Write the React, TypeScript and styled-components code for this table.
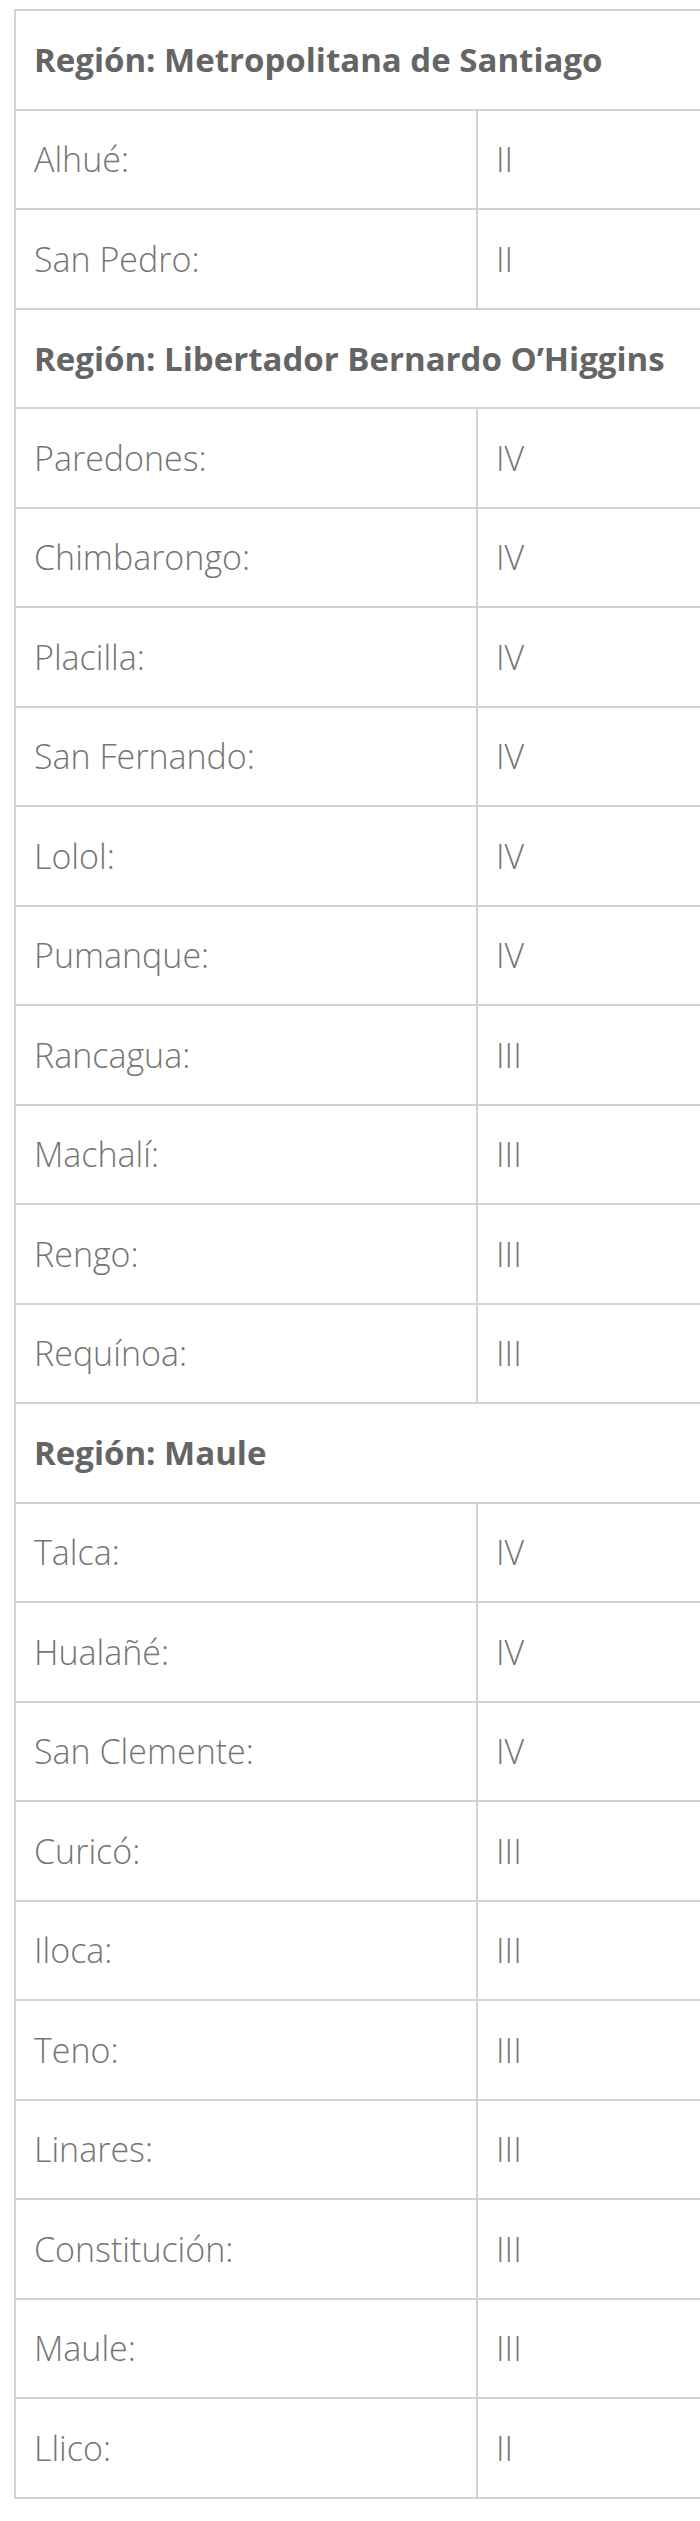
import React from "react";
import styled, { createGlobalStyle } from "styled-components";

const GlobalStyle = createGlobalStyle`
  html, body {
    margin: 0;
    padding: 0;
    background: #fff;
    overflow-x: hidden;
  }
  body {
    font-family: "Open Sans", "Noto Sans", sans-serif;
  }
`;

type Entry = { name: string; level: string };
type Region = { title: string; rows: Entry[] };

const regions: Region[] = [
  {
    title: "Región: Metropolitana de Santiago",
    rows: [
      { name: "Alhué:", level: "II" },
      { name: "San Pedro:", level: "II" },
    ],
  },
  {
    title: "Región: Libertador Bernardo O’Higgins",
    rows: [
      { name: "Paredones:", level: "IV" },
      { name: "Chimbarongo:", level: "IV" },
      { name: "Placilla:", level: "IV" },
      { name: "San Fernando:", level: "IV" },
      { name: "Lolol:", level: "IV" },
      { name: "Pumanque:", level: "IV" },
      { name: "Rancagua:", level: "III" },
      { name: "Machalí:", level: "III" },
      { name: "Rengo:", level: "III" },
      { name: "Requínoa:", level: "III" },
    ],
  },
  {
    title: "Región: Maule",
    rows: [
      { name: "Talca:", level: "IV" },
      { name: "Hualañé:", level: "IV" },
      { name: "San Clemente:", level: "IV" },
      { name: "Curicó:", level: "III" },
      { name: "Iloca:", level: "III" },
      { name: "Teno:", level: "III" },
      { name: "Linares:", level: "III" },
      { name: "Constitución:", level: "III" },
      { name: "Maule:", level: "III" },
      { name: "Llico:", level: "II" },
    ],
  },
];

const Page = styled.div`
  overflow: hidden;
  padding: 9px 0 20px 14px;
`;

const Table = styled.div`
  width: 940px;
  border-top: 2px solid #d9d1d1;
  border-left: 2px solid #d9d1d1;
`;

const Row = styled.div`
  display: grid;
  grid-template-columns: 462px 1fr;
  height: 99.5px;
`;

const Cell = styled.div<{ $header?: boolean }>`
  box-sizing: border-box;
  display: flex;
  align-items: center;
  padding: 0 18px;
  border-right: 2px solid #d9d1d1;
  border-bottom: 2px solid #d9d1d1;
  grid-column: ${(p) => (p.$header ? "1 / -1" : "auto")};
  font-family: "Open Sans", "Noto Sans", sans-serif;
  font-size: ${(p) => (p.$header ? "33px" : "34px")};
  font-weight: ${(p) => (p.$header ? 700 : 300)};
  color: ${(p) => (p.$header ? "#656565" : "#757575")};
  white-space: nowrap;
`;

function App() {
  return (
    <Page>
      <GlobalStyle />
      <Table>
        {regions.map((region) => (
          <React.Fragment key={region.title}>
            <Row>
              <Cell $header>{region.title}</Cell>
            </Row>
            {region.rows.map((r) => (
              <Row key={r.name}>
                <Cell>{r.name}</Cell>
                <Cell>{r.level}</Cell>
              </Row>
            ))}
          </React.Fragment>
        ))}
      </Table>
    </Page>
  );
}

export default App;
